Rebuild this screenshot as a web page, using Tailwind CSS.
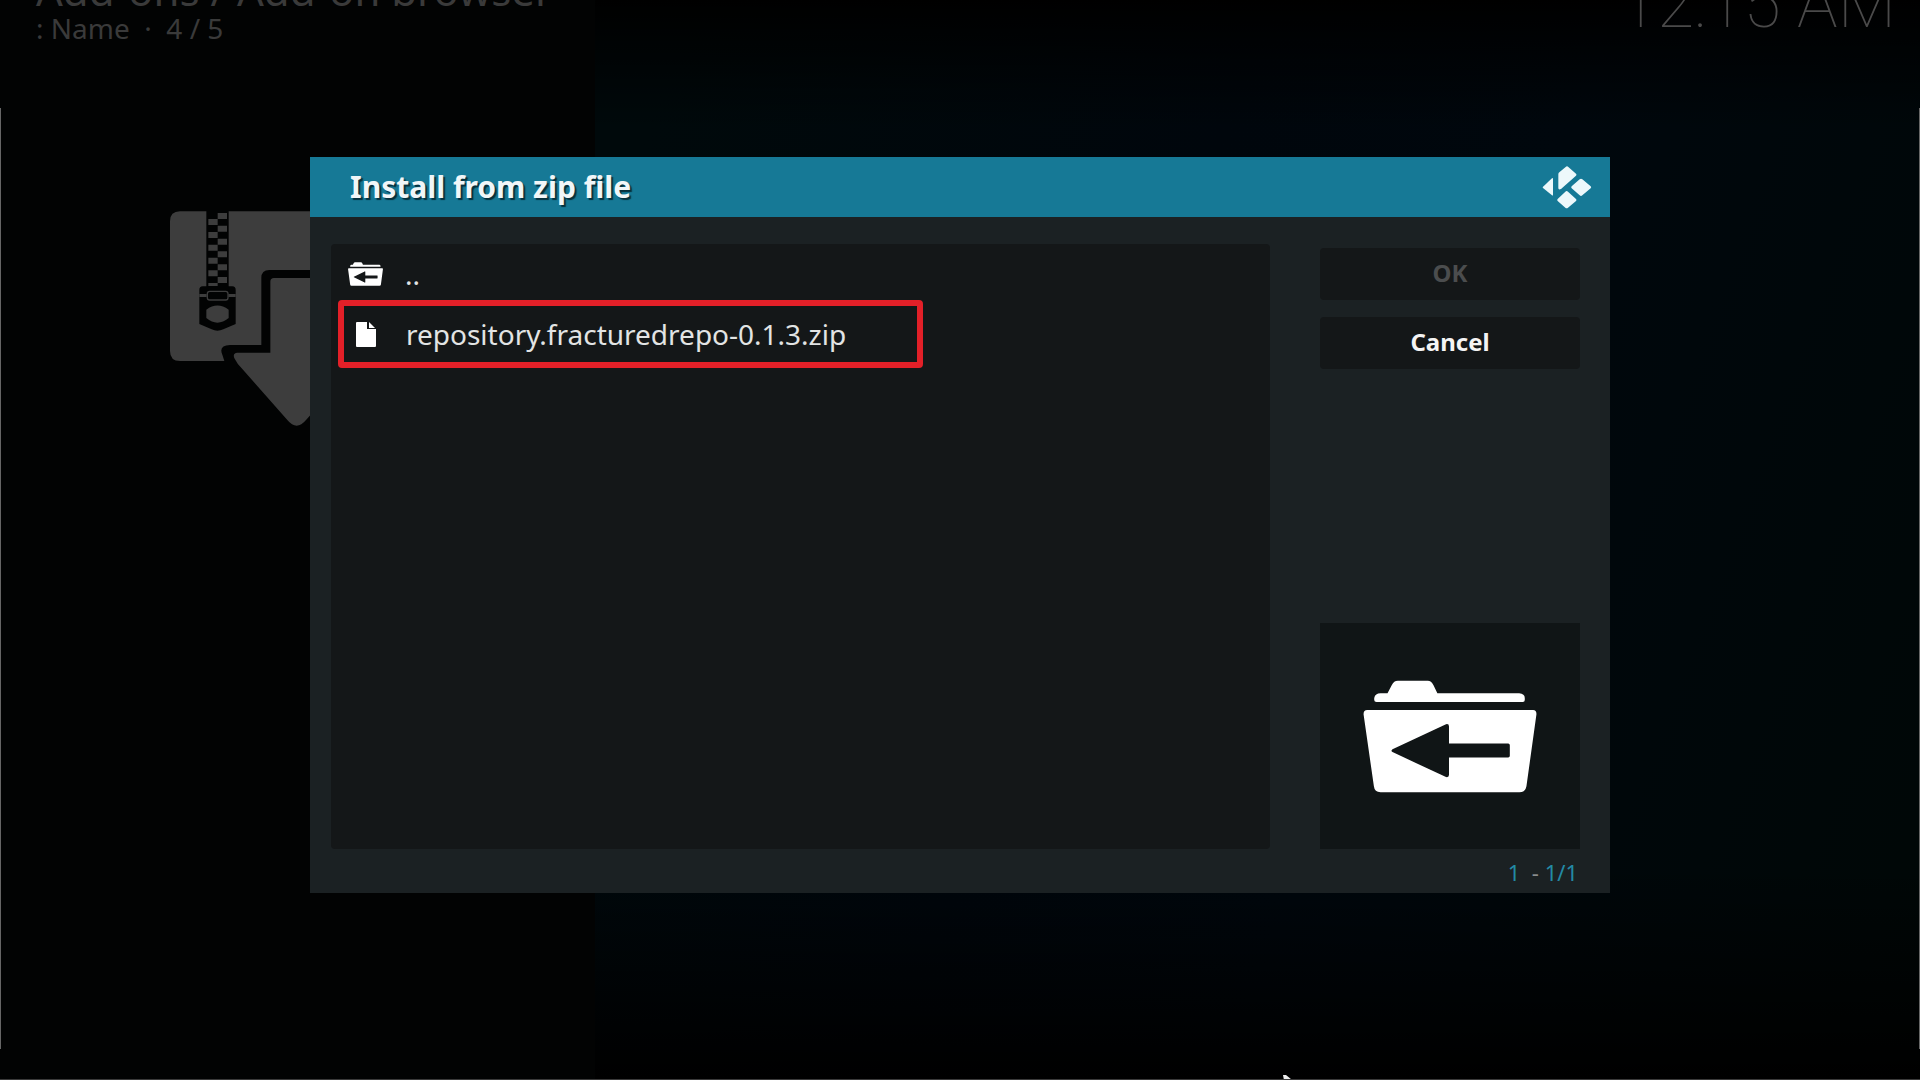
<!DOCTYPE html>
<html lang="en">
<head>
    <meta charset="UTF-8">
    <title>Add-on browser</title>
    <script src="https://cdn.jsdelivr.net/npm/@tailwindcss/browser@4"></script>
</head>
<body class="bg-black text-white font-['Noto_Sans',sans-serif]">
<div class="relative h-screen overflow-hidden flex flex-col border-b border-[#3a3a3a] bg-[linear-gradient(to_bottom,#000_0%,transparent_12%,transparent_80%,#000_100%),linear-gradient(110deg,#00090b_30%,#00060c_55%,#00070d_70%,#000706_100%)]">

    <!-- Dimmed add-on browser -->
    <div class="flex flex-1 min-h-0">
        <div class="w-[31%] bg-[#020303]">
            <header class="h-[242px] pl-9 text-[#3a3a3a] whitespace-nowrap">
                <h1 class="-mt-8 text-[42px] leading-[44px]">Add-ons / Add-on browser</h1>
                <p class="text-[28px] leading-8 whitespace-pre">: Name  ·  4 / 5</p>
            </header>
            <svg class="ml-[170px] w-[160px] h-[220px]" viewBox="60 60 480 660" aria-hidden="true">
                <path fill="#3d3d3d" d="M90 64H169V289H158Q148 289 148 300V402L185 418Q202 426 220 418L257 402V300Q257 289 247 289H236V64H540V240H358Q334 240 334 264V465H240Q205 466 217 494L223 513H90Q60 513 60 483V94Q60 64 90 64Z"/>
                <path fill="#3d3d3d" d="M540 264H372Q361 264 361 275V488H262Q246 490 254 506Q262 522 275 535L412 690Q440 724 468 690L540 610Z"/>
                <g fill="#3d3d3d">
                    <path d="M203 69h28v18h-28zM203 107h28v18h-28zM203 146h28v18h-28zM203 184h28v18h-28zM203 223h28v18h-28zM203 261h28v18h-28z"/>
                    <path d="M175 87h28v18h-28zM175 126h28v18h-28zM175 164h28v18h-28zM175 203h28v18h-28zM175 241h28v18h-28zM175 279h28v9h-28z"/>
                    <path d="M148 312h22v9h-22zM235 312h22v9h-22z"/>
                    <path d="M169 359Q202 334 236 359V384Q202 412 169 384Z"/>
                </g>
                <rect x="172" y="304" width="62" height="26" rx="7" fill="none" stroke="#3d3d3d" stroke-width="4"/>
            </svg>
        </div>
        <div class="flex-1 flex justify-end items-start pr-6">
            <time class="-mt-8 font-['Roboto'] font-thin text-[68px] leading-[72px] text-[#4a4a4a]">12:15 AM</time>
        </div>
    </div>

    <!-- Screen edges -->
    <div class="absolute left-0 top-[108px] bottom-[30px] w-px bg-[#666]"></div>
    <div class="absolute right-0 top-[108px] bottom-[30px] w-px bg-[#666]"></div>

    <!-- Dialog -->
    <div class="absolute inset-0 flex justify-center items-start pt-[157px]">
        <section role="dialog" aria-labelledby="dialog-title" class="w-[68%] max-w-[1300px] bg-[#1b2123]">
            <header class="h-[60px] pl-10 pr-[18px] flex items-center justify-between bg-[#167996]">
                <h2 id="dialog-title" class="text-[30px] leading-9 font-bold text-[#f0f6f8] text-shadow-[2px_2px_1px_#06303c]">Install from zip file</h2>
                <svg class="w-[50px] h-[44px]" viewBox="128 44 150 132" fill="#edf8fb" aria-label="Kodi">
                    <path d="M158 84q3-2 3 2v47q0 4-3 2l-27-22q-2-2 0-4z"/>
                    <path d="M180 66l19-16q4-4 8 0l23 20q3 3 0 6l-45 40q-8 4-8-3V72q0-4 3-6z"/>
                    <path d="M241 87q4-4 8 0l25 21q3 3 0 6l-25 21q-4 4-8 0l-24-21q-3-3 0-6z"/>
                    <path d="M198 124q4-4 8 0l24 22q3 3 0 6l-24 20q-4 4-8 0l-23-20q-3-3 0-6z"/>
                </svg>
            </header>

            <div class="flex pt-[27px] pl-[21px] pr-[30px]">
                <ul class="flex-1 h-[605px] rounded-sm bg-[#141718] text-[28px] leading-9 text-[#e2e4e4]">
                    <li>
                        <a href="#" class="h-14 pt-1 pl-[17px] flex items-center">
                            <svg class="w-[35px] h-6" viewBox="188 210 522 340" preserveAspectRatio="none" fill="#fff" aria-hidden="true">
                                <path d="M221 276V264Q224 250 240 250H261L274 225Q280 212 292 212H382Q393 212 399 225L411 250H657Q674 252 674 276Z"/>
                                <path fill-rule="evenodd" d="M200 300H699Q710 300 709 314L679 530Q676 548 658 548H240Q222 548 220 530L189 314Q188 300 200 300ZM276 418Q270 423 276 427L437 502Q446 504 446 495V443H624Q629 443 629 438V406Q629 401 624 401H446V350Q446 341 437 343Z"/>
                            </svg>
                            <span class="pl-[22px]">..</span>
                        </a>
                    </li>
                    <li class="ml-[7px] w-[585px]">
                        <a href="#" class="h-[68px] pl-3 flex items-center rounded-sm border-6 border-[#e32028]">
                            <svg class="w-[20px] h-[25px]" viewBox="0 0 20 25" fill="#fff" aria-hidden="true">
                                <path d="M1 0H11V7H20V24Q20 25 19 25H1Q0 25 0 24V1Q0 0 1 0Z"/>
                                <path d="M13 0L19 6H13Z"/>
                            </svg>
                            <span class="pl-[30px]">repository.fracturedrepo-0.1.3.zip</span>
                        </a>
                    </li>
                </ul>

                <div class="ml-[50px] w-[260px] pt-1 flex flex-col">
                    <button disabled class="h-[52px] pb-0.5 rounded-sm bg-[#141718] text-2xl font-bold text-[#4b4d4e]">OK</button>
                    <button class="mt-[17px] h-[52px] pb-0.5 rounded-sm bg-[#141718] text-2xl font-bold text-[#f4f4f4]">Cancel</button>
                    <div class="mt-auto h-[226px] flex items-center justify-center bg-[#101516]">
                        <svg class="w-[174px] h-[113px]" viewBox="188 210 522 340" fill="#fff" aria-hidden="true">
                            <path d="M221 276V264Q224 250 240 250H261L274 225Q280 212 292 212H382Q393 212 399 225L411 250H657Q674 252 674 264V270Q674 276 668 276H228Q221 276 221 270Z"/>
                            <path fill-rule="evenodd" d="M200 300H699Q710 300 709 314L679 530Q676 548 658 548H240Q222 548 220 530L189 314Q188 300 200 300ZM276 418Q270 423 276 427L437 502Q446 504 446 495V443H624Q629 443 629 438V406Q629 401 624 401H446V350Q446 341 437 343Z"/>
                        </svg>
                    </div>
                </div>
            </div>
            <p class="h-11 pt-[7px] pr-8 text-right text-[22px] leading-8 whitespace-pre text-[#238aa5]">1  <span class="text-[#8a8d8e]">-</span> 1/1</p>
        </section>
    </div>

    <!-- Mouse pointer -->
    <svg class="absolute left-[1283px] -bottom-3 w-4 h-4" viewBox="0 0 16 16" aria-hidden="true">
        <path d="M0 0L3 0L14 9L7 10L3 16Z" fill="#eee"/>
    </svg>
</div>
</body>
</html>
